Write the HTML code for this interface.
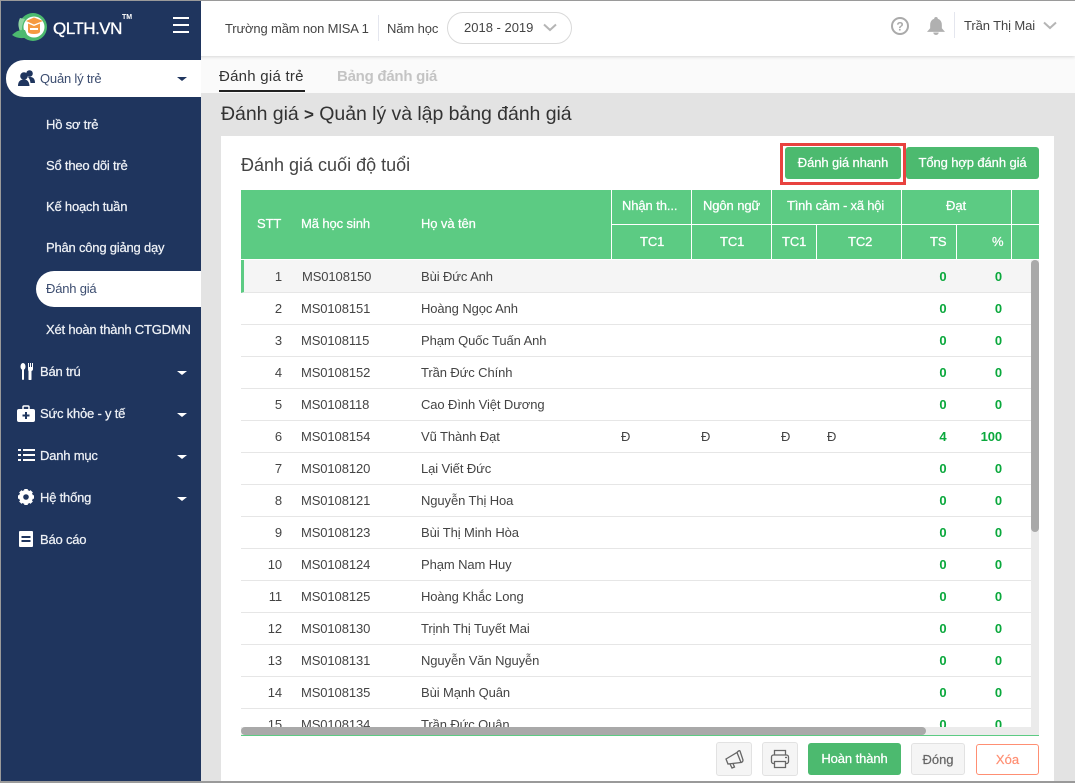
<!DOCTYPE html>
<html><head><meta charset="utf-8"><style>
*{box-sizing:border-box}
html,body{margin:0;padding:0;width:1075px;height:783px;overflow:hidden;background:#e3e3e3;font-family:"Liberation Sans","DejaVu Sans",sans-serif;font-size:13px;color:#444}
.a{position:absolute;white-space:nowrap}
.mi{position:absolute;left:46px;color:#eef1f6;font-size:13px;line-height:16px;white-space:nowrap;letter-spacing:-.2px;-webkit-text-stroke:.25px #eef1f6}
.mt{position:absolute;left:40px;color:#eef1f6;font-size:13px;line-height:16px;white-space:nowrap;letter-spacing:-.2px;-webkit-text-stroke:.25px #eef1f6}
.car{position:absolute;left:177px;width:0;height:0;border-left:5px solid transparent;border-right:5px solid transparent;border-top:4px solid #fff}
.h{position:absolute;color:#fff;font-size:13px;line-height:16px;white-space:nowrap;text-align:center;letter-spacing:-.1px;-webkit-text-stroke:.25px #fff}
.v{position:absolute;width:1px;background:#fff}
.row{position:absolute;left:241px;width:790px;height:32px;border-bottom:1px solid #e6e6e6;background:#fff}
.row span{position:absolute;top:8px;line-height:16px;white-space:nowrap;color:#444;font-size:13px;letter-spacing:-.1px}
.s{left:0;width:41px;text-align:right}
.c{left:60px}
.n{left:180px}
.t{left:694px;width:16px;text-align:center;color:#0aa83c!important;font-weight:bold}
.p{left:729px;width:32px;text-align:right;color:#0aa83c!important;font-weight:bold}
.btn{position:absolute;background:#4cba6f;border-radius:3px;color:#fff;font-size:13px;text-align:center;white-space:nowrap;letter-spacing:-.1px;-webkit-text-stroke:.25px #fff}
</style></head><body>
<div class="a" style="left:201px;top:56px;width:874px;height:37px;background:#fafafa"></div>
<div class="a" style="left:0;top:0;width:1075px;height:56px;background:#fff;box-shadow:0 1px 3px rgba(0,0,0,.14)"></div>

<!-- sidebar -->
<div class="a" style="left:1px;top:1px;width:200px;height:782px;background:#1f355e"></div>
<svg class="a" style="left:11px;top:12px" width="40" height="32" viewBox="0 0 40 32">
<circle cx="22" cy="15" r="14" fill="#4cba6f"/><circle cx="23" cy="15" r="10.500" fill="#fff"/>
<path d="M9 6 Q5 14 11 22 Q10 13 14 7Z" fill="#8fd6a2"/>
<path d="M1 23 Q7 17 14 18 L17 25 Q8 28 1 23Z" fill="#4cba6f"/>
<path d="M15 9 L23 5.500 L32 9 L23 12.500Z" fill="#f59a42"/><path d="M17 11.500 V20 Q18 22 23 22 Q28 22 29 20 V11.500 L23 14Z" fill="#f59a42"/><path d="M19 16h8v2h-8z" fill="#fff"/>
</svg>
<div class="a" style="left:53px;top:18px;color:#fff;font-size:17px;line-height:22px;letter-spacing:-.5px;-webkit-text-stroke:.35px #fff">QLTH.VN</div>
<div class="a" style="left:122px;top:14px;color:#fff;font-size:7px;line-height:8px;font-weight:bold">TM</div>
<div class="a" style="left:173px;top:17px;width:16px;height:2px;background:#fff"></div>
<div class="a" style="left:173px;top:24px;width:16px;height:2px;background:#fff"></div>
<div class="a" style="left:173px;top:31px;width:16px;height:2px;background:#fff"></div>

<div class="a" style="left:6px;top:60px;width:195px;height:37px;background:#fff;border-radius:18px 0 0 18px"></div>
<svg class="a" style="left:18px;top:70px" width="17" height="16" viewBox="0 0 17 16" fill="#1f355e"><circle cx="6" cy="6" r="3.800"/><circle cx="11.500" cy="3.500" r="3.300"/><path d="M0 16 Q0 9.500 6 9.500 Q11 9.500 11.500 16Z"/><path d="M10 7 Q17 6 17 13 L12.500 13 Q12 9 10 7Z"/></svg>
<div class="a" style="left:40px;top:71px;color:#3c4d70;font-size:13px;line-height:16px;letter-spacing:-.2px">Quản lý trẻ</div>
<div class="car" style="top:77px;border-top-color:#1f355e"></div>

<div class="mi" style="top:117px">Hồ sơ trẻ</div>
<div class="mi" style="top:158px">Sổ theo dõi trẻ</div>
<div class="mi" style="top:199px">Kế hoạch tuần</div>
<div class="mi" style="top:240px">Phân công giảng dạy</div>
<div class="a" style="left:36px;top:271px;width:165px;height:36px;background:#fff;border-radius:18px 0 0 18px"></div>
<div class="mi" style="top:281px;color:#3c4d70;-webkit-text-stroke:0">Đánh giá</div>
<div class="mi" style="top:322px">Xét hoàn thành CTGDMN</div>

<svg class="a" style="left:20px;top:363px" width="14" height="17" viewBox="0 0 14 17" fill="#fff"><ellipse cx="3" cy="3.500" rx="2.500" ry="3.500"/><rect x="2" y="6" width="2" height="11" rx="1"/><path d="M8 0h1v4h1V0h1v4h1V0h1v6q0 1.500-1.500 2V16a1 1 0 0 1-3 0V8Q8 7.500 8 6Z"/></svg>
<div class="mt" style="top:364px">Bán trú</div><div class="car" style="top:371px"></div>
<svg class="a" style="left:17px;top:405px" width="18" height="17" viewBox="0 0 18 17"><path d="M6 4V2Q6 1 7 1H11Q12 1 12 2V4" fill="none" stroke="#fff" stroke-width="1.500"/><rect y="4" width="18" height="13" rx="2" fill="#fff"/><path d="M8 7h2v2.500h2.500v2H10V14H8v-2.500H5.500v-2H8Z" fill="#1f355e"/></svg>
<div class="mt" style="top:406px">Sức khỏe - y tế</div><div class="car" style="top:413px"></div>
<svg class="a" style="left:18px;top:449px" width="17" height="13" fill="#fff"><rect width="3" height="2" y="0"/><rect x="5" width="12" height="2" y="0"/><rect width="3" height="2" y="5"/><rect x="5" width="12" height="2" y="5"/><rect width="3" height="2" y="10"/><rect x="5" width="12" height="2" y="10"/></svg>
<div class="mt" style="top:448px">Danh mục</div><div class="car" style="top:455px"></div>
<svg class="a" style="left:18px;top:489px" width="16" height="16" viewBox="0 0 16 16"><circle cx="8" cy="8" r="5" fill="none" stroke="#fff" stroke-width="4"/><path d="M8 0v16M0 8h16M2.300 2.300l11.400 11.400M13.700 2.300L2.300 13.700" stroke="#fff" stroke-width="3.500"/><circle cx="8" cy="8" r="2.800" fill="#1f355e"/></svg>
<div class="mt" style="top:490px">Hệ thống</div><div class="car" style="top:497px"></div>
<svg class="a" style="left:19px;top:531px" width="14" height="16"><rect width="14" height="16" rx="1" fill="#fff"/><rect x="2.500" y="5" width="9" height="2" fill="#1f355e"/><rect x="2.500" y="9" width="9" height="2" fill="#1f355e"/></svg>
<div class="mt" style="top:532px">Báo cáo</div>

<!-- top header -->
<div class="a" style="left:225px;top:21px;font-size:13px;line-height:16px;color:#444;letter-spacing:-.15px">Trường mầm non MISA 1</div>
<div class="a" style="left:378px;top:15px;width:1px;height:26px;background:#e4e6ee"></div>
<div class="a" style="left:387px;top:21px;font-size:13px;line-height:16px;color:#444;letter-spacing:-.1px">Năm học</div>
<div class="a" style="left:447px;top:12px;width:125px;height:32px;border:1px solid #d9d9d9;border-radius:16px"></div>
<div class="a" style="left:464px;top:20px;font-size:13px;line-height:16px;color:#444">2018 - 2019</div>
<svg class="a" style="left:543px;top:23px" width="14" height="9"><path d="M1 1.500L7 7L13 1.500" fill="none" stroke="#b5b5b5" stroke-width="2"/></svg>
<svg class="a" style="left:890px;top:16px" width="20" height="20" viewBox="0 0 20 20"><circle cx="10" cy="10" r="8" fill="none" stroke="#aaa" stroke-width="2"/><text x="10" y="14.500" text-anchor="middle" font-size="12" font-weight="bold" fill="#aaa" font-family="Liberation Sans">?</text></svg>
<svg class="a" style="left:927px;top:17px" width="18" height="18" viewBox="0 0 20 20" fill="#b0b0b0"><path d="M10 0a2 2 0 0 1 2 2Q16.500 3.500 16.500 9V12.500L20 16.500H0L3.500 12.500V9Q3.500 3.500 8 2A2 2 0 0 1 10 0Z"/><path d="M7 17.200h6a3 2.800 0 0 1-6 0Z"/></svg>
<div class="a" style="left:954px;top:12px;width:1px;height:26px;background:#e4e6ee"></div>
<div class="a" style="left:964px;top:18px;font-size:13px;line-height:16px;color:#444;letter-spacing:-.1px">Trần Thị Mai</div>
<svg class="a" style="left:1043px;top:21px" width="14" height="9"><path d="M1 1.500L7 7L13 1.500" fill="none" stroke="#b5b5b5" stroke-width="2"/></svg>

<!-- tabs -->
<div class="a" style="left:219px;top:68px;font-size:15px;line-height:18px;color:#333;letter-spacing:.25px">Đánh giá trẻ</div>
<div class="a" style="left:219px;top:90px;width:86px;height:2px;background:#222"></div>
<div class="a" style="left:337px;top:68px;font-size:15px;line-height:18px;color:#c4c4c4;font-weight:bold;letter-spacing:-.25px">Bảng đánh giá</div>
<div class="a" style="left:221px;top:103px;font-size:19.500px;line-height:22px;color:#333;letter-spacing:-.05px">Đánh giá <b style="font-size:17px">&gt;</b> Quản lý và lập bảng đánh giá</div>

<!-- card -->
<div class="a" style="left:221px;top:136px;width:833px;height:645px;background:#fff"></div>
<div class="a" style="left:241px;top:155px;font-size:18px;line-height:20px;color:#444">Đánh giá cuối độ tuổi</div>
<div class="a" style="left:780px;top:143px;width:126px;height:42px;border:3px solid #e8423f"></div>
<div class="btn" style="left:785px;top:147px;width:116px;height:32px;line-height:32px">Đánh giá nhanh</div>
<div class="btn" style="left:906px;top:147px;width:133px;height:32px;line-height:32px">Tổng hợp đánh giá</div>

<!-- table header -->
<div class="a" style="left:241px;top:190px;width:798px;height:69px;background:#5ccb83"></div>
<div class="a" style="left:611px;top:224px;width:428px;height:1px;background:#fff"></div>
<div class="v" style="left:611px;top:190px;height:69px"></div>
<div class="v" style="left:691px;top:190px;height:69px"></div>
<div class="v" style="left:771px;top:190px;height:69px"></div>
<div class="v" style="left:816px;top:225px;height:34px"></div>
<div class="v" style="left:901px;top:190px;height:69px"></div>
<div class="v" style="left:956px;top:225px;height:34px"></div>
<div class="v" style="left:1011px;top:190px;height:69px"></div>
<div class="h" style="left:257px;top:216px">STT</div>
<div class="h" style="left:301px;top:216px">Mã học sinh</div>
<div class="h" style="left:421px;top:216px">Họ và tên</div>
<div class="h" style="left:622px;top:198px">Nhận th...</div>
<div class="h" style="left:703px;top:198px">Ngôn ngữ</div>
<div class="h" style="left:787px;top:198px;letter-spacing:-.2px">Tình cảm - xã hội</div>
<div class="h" style="left:901px;top:198px;width:110px">Đạt</div>
<div class="h" style="left:640px;top:234px">TC1</div>
<div class="h" style="left:720px;top:234px">TC1</div>
<div class="h" style="left:782px;top:234px">TC1</div>
<div class="h" style="left:848px;top:234px">TC2</div>
<div class="h" style="left:930px;top:234px">TS</div>
<div class="h" style="left:992px;top:234px">%</div>

<!-- rows -->
<div class="row" style="top:260px;height:33px;background:#f5f5f5;border-left:3px solid #5ccb83"><span class="s" style="left:-3px;top:9px">1</span><span class="c" style="left:58px;top:9px">MS0108150</span><span class="n" style="left:177px;top:9px">Bùi Đức Anh</span><span class="t" style="left:691px;top:9px">0</span><span class="p" style="left:726px;top:9px">0</span></div>
<div class="row" style="top:293px"><span class="s">2</span><span class="c">MS0108151</span><span class="n">Hoàng Ngọc Anh</span><span class="t">0</span><span class="p">0</span></div>
<div class="row" style="top:325px"><span class="s">3</span><span class="c">MS0108115</span><span class="n">Phạm Quốc Tuấn Anh</span><span class="t">0</span><span class="p">0</span></div>
<div class="row" style="top:357px"><span class="s">4</span><span class="c">MS0108152</span><span class="n">Trần Đức Chính</span><span class="t">0</span><span class="p">0</span></div>
<div class="row" style="top:389px"><span class="s">5</span><span class="c">MS0108118</span><span class="n">Cao Đình Việt Dương</span><span class="t">0</span><span class="p">0</span></div>
<div class="row" style="top:421px"><span class="s">6</span><span class="c">MS0108154</span><span class="n">Vũ Thành Đạt</span><span style="left:380px">Đ</span><span style="left:460px">Đ</span><span style="left:540px">Đ</span><span style="left:586px">Đ</span><span class="t">4</span><span class="p">100</span></div>
<div class="row" style="top:453px"><span class="s">7</span><span class="c">MS0108120</span><span class="n">Lại Viết Đức</span><span class="t">0</span><span class="p">0</span></div>
<div class="row" style="top:485px"><span class="s">8</span><span class="c">MS0108121</span><span class="n">Nguyễn Thị Hoa</span><span class="t">0</span><span class="p">0</span></div>
<div class="row" style="top:517px"><span class="s">9</span><span class="c">MS0108123</span><span class="n">Bùi Thị Minh Hòa</span><span class="t">0</span><span class="p">0</span></div>
<div class="row" style="top:549px"><span class="s">10</span><span class="c">MS0108124</span><span class="n">Phạm Nam Huy</span><span class="t">0</span><span class="p">0</span></div>
<div class="row" style="top:581px"><span class="s">11</span><span class="c">MS0108125</span><span class="n">Hoàng Khắc Long</span><span class="t">0</span><span class="p">0</span></div>
<div class="row" style="top:613px"><span class="s">12</span><span class="c">MS0108130</span><span class="n">Trịnh Thị Tuyết Mai</span><span class="t">0</span><span class="p">0</span></div>
<div class="row" style="top:645px"><span class="s">13</span><span class="c">MS0108131</span><span class="n">Nguyễn Văn Nguyễn</span><span class="t">0</span><span class="p">0</span></div>
<div class="row" style="top:677px"><span class="s">14</span><span class="c">MS0108135</span><span class="n">Bùi Mạnh Quân</span><span class="t">0</span><span class="p">0</span></div>
<div class="a" style="left:241px;top:709px;width:790px;height:18px;overflow:hidden;background:#fff"><div class="row" style="left:0;top:0;border:0"><span class="s">15</span><span class="c">MS0108134</span><span class="n">Trần Đức Quân</span><span class="t">0</span><span class="p">0</span></div></div>

<!-- scrollbars -->
<div class="a" style="left:1031px;top:260px;width:8px;height:475px;background:#ebebeb"></div>
<div class="a" style="left:1031px;top:260px;width:8px;height:272px;background:#a9a9a9;border-radius:4px"></div>
<div class="a" style="left:241px;top:727px;width:790px;height:8px;background:#ebebeb"></div>
<div class="a" style="left:241px;top:727px;width:685px;height:8px;background:#a9a9a9;border-radius:4px"></div>
<div class="a" style="left:241px;top:735px;width:798px;height:1px;background:#5ccb83"></div>

<!-- footer buttons -->
<div class="a" style="left:716px;top:742px;width:36px;height:34px;background:#f5f5f5;border:1px solid #e2e2e2;border-radius:3px"></div>
<svg class="a" style="left:724px;top:749px" width="21" height="21" viewBox="0 0 21 21" fill="none" stroke="#666" stroke-width="1.300"><path d="M2 10L13 3.500L17 13.500L4 15Z"/><path d="M13 3.500Q15 1 16 2L19 11Q19 13 17 13.500"/><path d="M6 15L8 19L10.500 18L9 14.500"/></svg>
<div class="a" style="left:762px;top:742px;width:36px;height:34px;background:#f5f5f5;border:1px solid #e2e2e2;border-radius:3px"></div>
<svg class="a" style="left:770px;top:749px" width="20" height="20" viewBox="0 0 20 20" fill="none" stroke="#666" stroke-width="1.300"><path d="M4.500 6V1.500H15.500V6"/><rect x="1.500" y="6" width="17" height="8.500" rx="2"/><path d="M4.500 12.500H15.500V18.500H4.500Z" fill="#f5f5f5"/><path d="M15 8.500h2"/></svg>
<div class="btn" style="left:808px;top:743px;width:93px;height:32px;line-height:32px">Hoàn thành</div>
<div class="a" style="left:911px;top:743px;width:54px;height:32px;background:#f5f5f5;border:1px solid #e2e2e2;border-radius:3px;text-align:center;line-height:31px;color:#666;font-size:13px;-webkit-text-stroke:.2px #666">Đóng</div>
<div class="a" style="left:976px;top:744px;width:63px;height:31px;background:#fff;border:1px solid #ff8f73;border-radius:3px;text-align:center;line-height:30px;color:#ff8f73;font-size:13px;-webkit-text-stroke:.2px #ff8f73">Xóa</div>

<!-- window frame -->
<div class="a" style="left:0;top:0;width:1075px;height:1px;background:#9a9a9a"></div>
<div class="a" style="left:0;top:0;width:1px;height:783px;background:#9a9a9a"></div>
<div class="a" style="left:0;top:781px;width:1075px;height:2px;background:#9a9a9a"></div>
</body></html>
